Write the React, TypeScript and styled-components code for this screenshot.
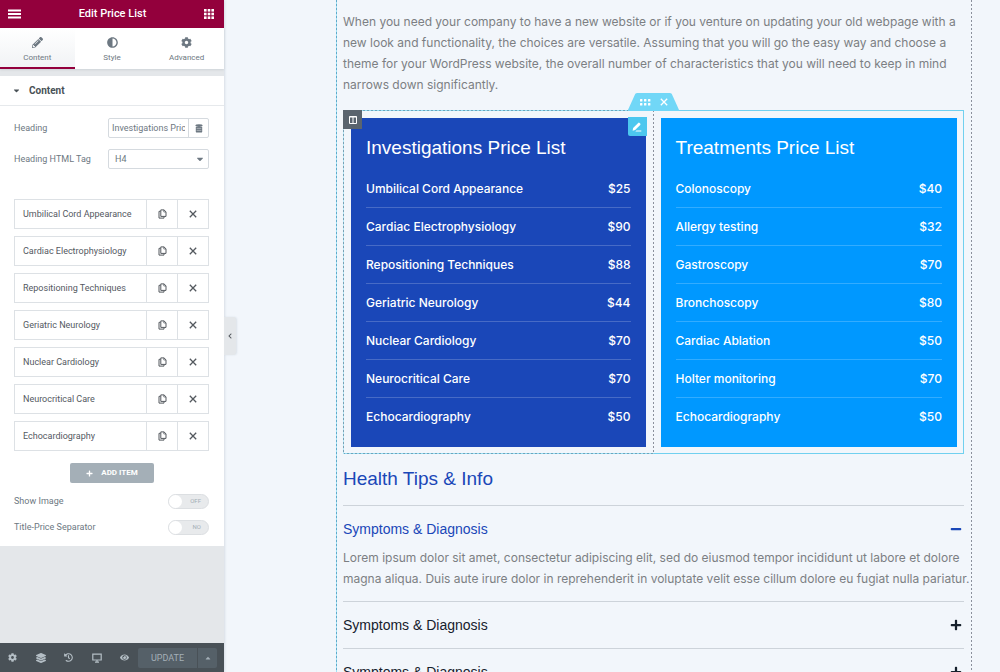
import React, { useState } from "react";
import styled, { createGlobalStyle, css } from "styled-components";
import {
  FaPencilAlt, FaAdjust, FaCog, FaLayerGroup, FaHistory, FaEye,
  FaCaretDown, FaCaretUp, FaChevronLeft, FaPlus, FaMinus,
} from "react-icons/fa";

const Global = createGlobalStyle`
  * { box-sizing: border-box; }
  body { margin: 0; background: #f2f6fb; }
  button, input, select { font: inherit; color: inherit; margin: 0; border-radius: 0; }
  button { border: 0; padding: 0; background: none; cursor: pointer; }
  h1, h2, h3, p, ul { margin: 0; padding: 0; font-weight: 400; }
`;

const display = `"Liberation Sans", Arial, sans-serif`;

const Shell = styled.div`
  display: flex;
  height: 100vh;
  overflow: hidden;
`;

const Sidebar = styled.aside`
  position: relative;
  flex: 0 0 224px;
  display: flex;
  flex-direction: column;
  background: #e4e7ea;
  box-shadow: 0 0 3px rgba(60, 80, 100, 0.25);
  font: 9px/12px Roboto, sans-serif;
  color: #54595f;
`;

const Header = styled.header`
  display: flex;
  align-items: center;
  justify-content: space-between;
  height: 28px;
  padding: 0 10px 1px 8px;
  background: #93003c;
  color: #fff;
`;

const HeaderTitle = styled.h1`
  font-size: 11px;
  line-height: 16px;
  font-weight: 500;
`;

const IconButton = styled.button`
  display: grid;
  place-items: center;
`;

const Tabs = styled.nav`
  display: flex;
  height: 41px;
  background: #fff;
  box-shadow: 0 1px 2px rgba(60, 80, 100, 0.12);
`;

const Tab = styled.button<{ $active?: boolean }>`
  flex: 1;
  display: flex;
  flex-direction: column;
  align-items: center;
  gap: 5px;
  padding-top: 9px;
  font-size: 8px;
  line-height: 10px;
  color: #6d7882;
  border-bottom: 2px solid transparent;
  svg { width: 11px; height: 11px; }
  ${(p) => p.$active && css`
    background: linear-gradient(#fff, #f1f3f5);
    border-color: #93003c;
  `}
`;

const Panel = styled.section`
  margin-top: 7px;
  background: #fff;
  padding-bottom: 11px;
`;

const PanelToggle = styled.button`
  display: flex;
  align-items: center;
  gap: 8px;
  width: 100%;
  height: 30px;
  padding: 0 12px;
  border-bottom: 1px solid #e6e9ec;
  font-weight: 700;
  font-size: 10px;
  color: #495157;
`;

const Controls = styled.div`
  display: flex;
  flex-direction: column;
  gap: 11px;
  padding: 12px 15px 0 14px;
`;

const Control = styled.div`
  display: flex;
  align-items: center;
  justify-content: space-between;
  height: 20px;
  color: #6d7882;
`;

const Field = styled.div`
  position: relative;
  display: flex;
  align-items: center;
  width: 101px;
  height: 20px;
  border: 1px solid #d5dadf;
  border-radius: 2px;
  background: #fff;
`;

const TextInput = styled.input`
  flex: 1;
  min-width: 0;
  height: 18px;
  padding: 0 3px;
  border: 0;
  outline: 0;
  background: none;
`;

const DynamicButton = styled(IconButton)`
  width: 20px;
  height: 18px;
  border-left: 1px solid #d5dadf;
`;

const Select = styled.select`
  width: 100%;
  height: 18px;
  padding: 0 6px;
  border: 0;
  outline: 0;
  appearance: none;
  background: none;
`;

const SelectArrow = styled(FaCaretDown)`
  position: absolute;
  right: 3px;
  pointer-events: none;
`;

const Repeater = styled.ul`
  display: flex;
  flex-direction: column;
  gap: 7px;
  margin-top: 30px;
  padding: 0 15px 0 14px;
  list-style: none;
`;

const RepeaterItem = styled.li`
  display: grid;
  grid-template-columns: 1fr 31px 31px;
  height: 30px;
  border: 1px solid #dde1e5;
  button + button { border-left: 1px solid #dde1e5; }
`;

const ItemTitle = styled.button`
  padding-left: 8px;
  text-align: left;
`;

const AddButton = styled.button`
  display: flex;
  align-items: center;
  justify-content: center;
  gap: 8px;
  width: 84px;
  height: 20px;
  margin: 12px auto 10px;
  border-radius: 2px;
  background: #a4afb7;
  color: #fff;
  font-size: 8px;
  font-weight: 700;
`;

const Switches = styled.div`
  display: flex;
  flex-direction: column;
  gap: 10px;
  padding: 0 15px 0 14px;
`;

const SwitchRow = styled.label`
  display: flex;
  align-items: center;
  justify-content: space-between;
  height: 16px;
  color: #6d7882;
`;

const Switch = styled.span`
  position: relative;
  display: flex;
  align-items: center;
  justify-content: flex-end;
  width: 41px;
  height: 15px;
  padding-right: 7px;
  border-radius: 8px;
  background: #e8eaec;
  border: 1px solid #dcdfe2;
  font-size: 6px;
  line-height: 8px;
  color: #a4afb7;
  &::before {
    content: "";
    position: absolute;
    left: 0;
    top: 0;
    width: 13px;
    height: 13px;
    border-radius: 50%;
    background: #fff;
  }
  input { position: absolute; inset: 0; opacity: 0; margin: 0; }
`;

const Footer = styled.footer`
  display: flex;
  align-items: center;
  height: 29px;
  margin-top: auto;
  background: #495157;
  color: #b4bec5;
`;

const FooterTools = styled.div`
  flex: 1;
  display: flex;
  justify-content: space-between;
  padding: 0 9px 0 8px;
`;

const Publish = styled.div`
  display: flex;
  height: 20px;
  margin-right: 7px;
  border-radius: 2px;
  background: #556068;
  color: #a4afb7;
  button:first-child { width: 59px; }
  button:last-child { width: 20px; border-left: 1px solid #495157; }
`;

const Collapse = styled.button`
  position: absolute;
  left: 100%;
  top: 317px;
  display: grid;
  place-items: center;
  width: 12px;
  height: 38px;
  border-radius: 0 3px 3px 0;
  background: #e4e7ea;
  box-shadow: 1px 0 2px rgba(60, 80, 100, 0.12);
`;

const Canvas = styled.main`
  flex: 1;
  min-width: 0;
  padding: 0 28px 0 112px;
  background: #f2f6fb;
  font: 12px/21px Inter, "Liberation Sans", sans-serif;
  color: #7c7f83;
`;

const PageColumn = styled.div`
  padding: 11px 8px 0 7px;
  background:
    repeating-linear-gradient(#5fa9c9 0 2px, #a0e0f4 2px 4px) left / 1px 100% no-repeat,
    repeating-linear-gradient(#8b909c 0 2px, transparent 2px 4px) right / 1px 100% no-repeat;
`;

const Intro = styled.p`
  padding-bottom: 15px;
  white-space: nowrap;
`;

const InnerSection = styled.section`
  position: relative;
  display: grid;
  grid-template-columns: 1fr 1fr;
  height: 344px;
  border: 1px solid #71d0ef;
`;

const Column = styled.div<{ $outlined?: boolean }>`
  position: relative;
  padding: 7px 6px 6px 7px;
  ${(p) => p.$outlined && css`
    margin: -1px 0 -1px -1px;
    padding: 8px 8px 7px;
    background:
      repeating-linear-gradient(#77a0b4 0 2px, #b4e4f4 2px 4px) left / 1px 100% no-repeat,
      repeating-linear-gradient(#8b909c 0 2px, transparent 2px 4px) right / 1px 100% no-repeat,
      repeating-linear-gradient(90deg, #6da3ba 0 2px, #93dcf3 2px 4px) top / 100% 1px no-repeat,
      repeating-linear-gradient(90deg, #6da3ba 0 2px, #93dcf3 2px 4px) bottom / 100% 1px no-repeat;
  `}
`;

const Card = styled.article<{ $tone: string }>`
  height: 100%;
  padding: 18px 15px 0;
  background: ${(p) => p.$tone};
  color: #fff;
  font-weight: 500;
`;

const CardTitle = styled.h2`
  font-family: ${display};
  font-size: 19px;
  line-height: 24px;
  margin-bottom: 9px;
`;

const PriceRow = styled.div`
  display: flex;
  align-items: center;
  justify-content: space-between;
  height: 38px;
  & + & { border-top: 1px solid rgba(255, 255, 255, 0.2); }
`;

const ColumnHandle = styled(IconButton)`
  position: absolute;
  left: 0;
  top: 0;
  width: 19px;
  height: 19px;
  background: #5a646e;
  color: #fff;
`;

const EditHandle = styled(IconButton)`
  position: absolute;
  right: 7px;
  top: 7px;
  width: 19px;
  height: 19px;
  border-radius: 0 0 0 2px;
  background: #4cc7ef;
  color: #fff;
`;

const SectionHandle = styled.div`
  position: absolute;
  left: 50%;
  bottom: 100%;
  display: flex;
  align-items: center;
  justify-content: center;
  gap: 9px;
  width: 52px;
  height: 18px;
  margin-left: -26px;
  background: #71d7f7;
  clip-path: polygon(18% 0, 82% 0, 85% 4%, 100% 100%, 0 100%, 15% 4%);
  color: #fff;
`;

const TipsTitle = styled.h2`
  padding: 12px 0 14px;
  font-family: ${display};
  font-size: 19px;
  line-height: 25px;
  color: #1a47b8;
`;

const Tip = styled.section`
  border-top: 1px solid #cdd3da;
`;

const TipHeader = styled.button<{ $open?: boolean }>`
  display: flex;
  align-items: center;
  justify-content: space-between;
  width: 100%;
  height: 46px;
  padding-right: 2px;
  font-family: ${display};
  font-size: 14px;
  line-height: 20px;
  color: ${(p) => (p.$open ? "#1a47b8" : "#16202c")};
`;

const TipBody = styled.p`
  margin-top: -5px;
  padding-bottom: 12px;
  white-space: nowrap;
`;

const MenuIcon = () => (
  <svg width="13" height="10" viewBox="0 0 13 10" fill="currentColor">
    <path d="M0 0.5h13v2H0zM0 4h13v2H0zM0 7.5h13v2H0z" />
  </svg>
);

const GridIcon = () => (
  <svg width="10" height="10" viewBox="0 0 10 10" fill="currentColor">
    {[0, 3.7, 7.4].map((y) => [0, 3.7, 7.4].map((x) => (
      <rect key={`${x}-${y}`} x={x} y={y} width="2.6" height="2.6" />
    )))}
  </svg>
);

const StackIcon = () => (
  <svg width="8" height="9" viewBox="0 0 8 9" fill="#6d7882">
    <ellipse cx="4" cy="1.6" rx="3.6" ry="1.4" />
    <path d="M0.8 3H7.2V7.4Q7.2 8.6 6 8.6H2Q0.8 8.6 0.8 7.4z" />
    <path d="M1.6 4.4H6.4M1.6 6.4H6.4" stroke="#fff" strokeWidth="0.4" />
  </svg>
);

const CopyIcon = () => (
  <svg width="9" height="10" viewBox="0 0 9 10" fill="none" stroke="currentColor" strokeWidth="1">
    <path d="M2.8 0.9H6L8 2.8V7.4H2.8z" />
    <path d="M5.8 0.9V3H8" strokeWidth="0.7" />
    <path d="M2.5 2.3H1V9.1H6V7.8" />
  </svg>
);

const CrossIcon = ({ size = 8 }: { size?: number }) => (
  <svg width={size} height={size} viewBox="0 0 8 8" fill="none" stroke="currentColor" strokeWidth="1.3">
    <path d="M0.8 0.8L7.2 7.2M7.2 0.8L0.8 7.2" />
  </svg>
);

const DesktopIcon = () => (
  <svg width="10" height="10" viewBox="0 0 10 10" fill="none" stroke="currentColor" strokeWidth="1.2">
    <path d="M0.8 1.2H9.2V7H0.8z" />
    <path d="M5 7V9M3 9.1H7" />
  </svg>
);

const ColumnIcon = () => (
  <svg width="8" height="8" viewBox="0 0 8 8" fill="none" stroke="currentColor" strokeWidth="1">
    <path d="M0.5 0.5H7.5V7.5H0.5zM4 0.5V7.5M0.5 1H7.5" />
  </svg>
);

const EditIcon = () => (
  <svg width="10" height="10" viewBox="0 0 9 9" fill="currentColor">
    <path d="M0.6 7.8L1 5.4L5.6 0.8Q6.2 0.3 6.8 0.8L7.4 1.4Q7.9 2 7.4 2.6L2.8 7.2z" />
    <path d="M4 7.6H8.4V8.6H3z" />
  </svg>
);

const DragIcon = () => (
  <svg width="11" height="7" viewBox="0 0 11 7" fill="currentColor">
    {[0, 4].map((y) => [0, 4, 8].map((x) => (
      <rect key={`${x}-${y}`} x={x} y={y} width="2.4" height="2.4" rx="0.5" />
    )))}
  </svg>
);

type Price = [string, string];

const investigations: Price[] = [
  ["Umbilical Cord Appearance", "$25"],
  ["Cardiac Electrophysiology", "$90"],
  ["Repositioning Techniques", "$88"],
  ["Geriatric Neurology", "$44"],
  ["Nuclear Cardiology", "$70"],
  ["Neurocritical Care", "$70"],
  ["Echocardiography", "$50"],
];

const treatments: Price[] = [
  ["Colonoscopy", "$40"],
  ["Allergy testing", "$32"],
  ["Gastroscopy", "$70"],
  ["Bronchoscopy", "$80"],
  ["Cardiac Ablation", "$50"],
  ["Holter monitoring", "$70"],
  ["Echocardiography", "$50"],
];

function PriceCard({ title, tone, rows }: { title: string; tone: string; rows: Price[] }) {
  return (
    <Card $tone={tone}>
      <CardTitle>{title}</CardTitle>
      {rows.map(([name, price]) => (
        <PriceRow key={name}>
          <span>{name}</span>
          <span>{price}</span>
        </PriceRow>
      ))}
    </Card>
  );
}

export default function App() {
  const [heading, setHeading] = useState("Investigations Price List");
  return (
    <Shell>
      <Global />
      <Sidebar>
        <Header>
          <IconButton aria-label="Menu"><MenuIcon /></IconButton>
          <HeaderTitle>Edit Price List</HeaderTitle>
          <IconButton aria-label="Widgets"><GridIcon /></IconButton>
        </Header>
        <Tabs>
          <Tab $active><FaPencilAlt />Content</Tab>
          <Tab><FaAdjust />Style</Tab>
          <Tab><FaCog />Advanced</Tab>
        </Tabs>
        <Panel>
          <PanelToggle><FaCaretDown size={9} />Content</PanelToggle>
          <Controls>
            <Control>
              <label htmlFor="heading">Heading</label>
              <Field>
                <TextInput id="heading" value={heading} onChange={(e) => setHeading(e.target.value)} />
                <DynamicButton aria-label="Dynamic tags"><StackIcon /></DynamicButton>
              </Field>
            </Control>
            <Control>
              <label htmlFor="tag">Heading HTML Tag</label>
              <Field>
                <Select id="tag" defaultValue="H4"><option>H4</option></Select>
                <SelectArrow size={10} />
              </Field>
            </Control>
          </Controls>
          <Repeater>
            {investigations.map(([name]) => (
              <RepeaterItem key={name}>
                <ItemTitle>{name}</ItemTitle>
                <IconButton aria-label={`Duplicate ${name}`}><CopyIcon /></IconButton>
                <IconButton aria-label={`Remove ${name}`}><CrossIcon /></IconButton>
              </RepeaterItem>
            ))}
          </Repeater>
          <AddButton><FaPlus size={7} />ADD ITEM</AddButton>
          <Switches>
            <SwitchRow>Show Image<Switch><input type="checkbox" />OFF</Switch></SwitchRow>
            <SwitchRow>Title-Price Separator<Switch><input type="checkbox" />NO</Switch></SwitchRow>
          </Switches>
        </Panel>
        <Footer>
          <FooterTools>
            <IconButton aria-label="Settings"><FaCog size={9} /></IconButton>
            <IconButton aria-label="Navigator"><FaLayerGroup size={10} /></IconButton>
            <IconButton aria-label="History"><FaHistory size={9} /></IconButton>
            <IconButton aria-label="Responsive mode"><DesktopIcon /></IconButton>
            <IconButton aria-label="Preview"><FaEye size={9} /></IconButton>
          </FooterTools>
          <Publish>
            <button>UPDATE</button>
            <IconButton aria-label="Save options"><FaCaretUp size={8} /></IconButton>
          </Publish>
        </Footer>
        <Collapse aria-label="Collapse panel"><FaChevronLeft size={6} /></Collapse>
      </Sidebar>
      <Canvas>
        <PageColumn>
          <Intro>
            When you need your company to have a new website or if you venture on updating your old webpage with a<br />
            new look and functionality, the choices are versatile. Assuming that you will go the easy way and choose a<br />
            theme for your WordPress website, the overall number of characteristics that you will need to keep in mind<br />
            narrows down significantly.
          </Intro>
          <InnerSection>
            <Column $outlined>
              <PriceCard title="Investigations Price List" tone="#1a47b8" rows={investigations} />
              <ColumnHandle aria-label="Edit column"><ColumnIcon /></ColumnHandle>
              <EditHandle aria-label="Edit price list"><EditIcon /></EditHandle>
            </Column>
            <Column>
              <PriceCard title="Treatments Price List" tone="#0098ff" rows={treatments} />
            </Column>
            <SectionHandle>
              <IconButton aria-label="Drag section"><DragIcon /></IconButton>
              <IconButton aria-label="Delete section"><CrossIcon size={8} /></IconButton>
            </SectionHandle>
          </InnerSection>
          <TipsTitle>Health Tips &amp; Info</TipsTitle>
          <Tip>
            <TipHeader $open>Symptoms &amp; Diagnosis<FaMinus size={12} /></TipHeader>
            <TipBody>
              Lorem ipsum dolor sit amet, consectetur adipiscing elit, sed do eiusmod tempor incididunt ut labore et dolore<br />
              magna aliqua. Duis aute irure dolor in reprehenderit in voluptate velit esse cillum dolore eu fugiat nulla pariatur.
            </TipBody>
          </Tip>
          <Tip><TipHeader>Symptoms &amp; Diagnosis<FaPlus size={12} /></TipHeader></Tip>
          <Tip><TipHeader>Symptoms &amp; Diagnosis<FaPlus size={12} /></TipHeader></Tip>
        </PageColumn>
      </Canvas>
    </Shell>
  );
}
